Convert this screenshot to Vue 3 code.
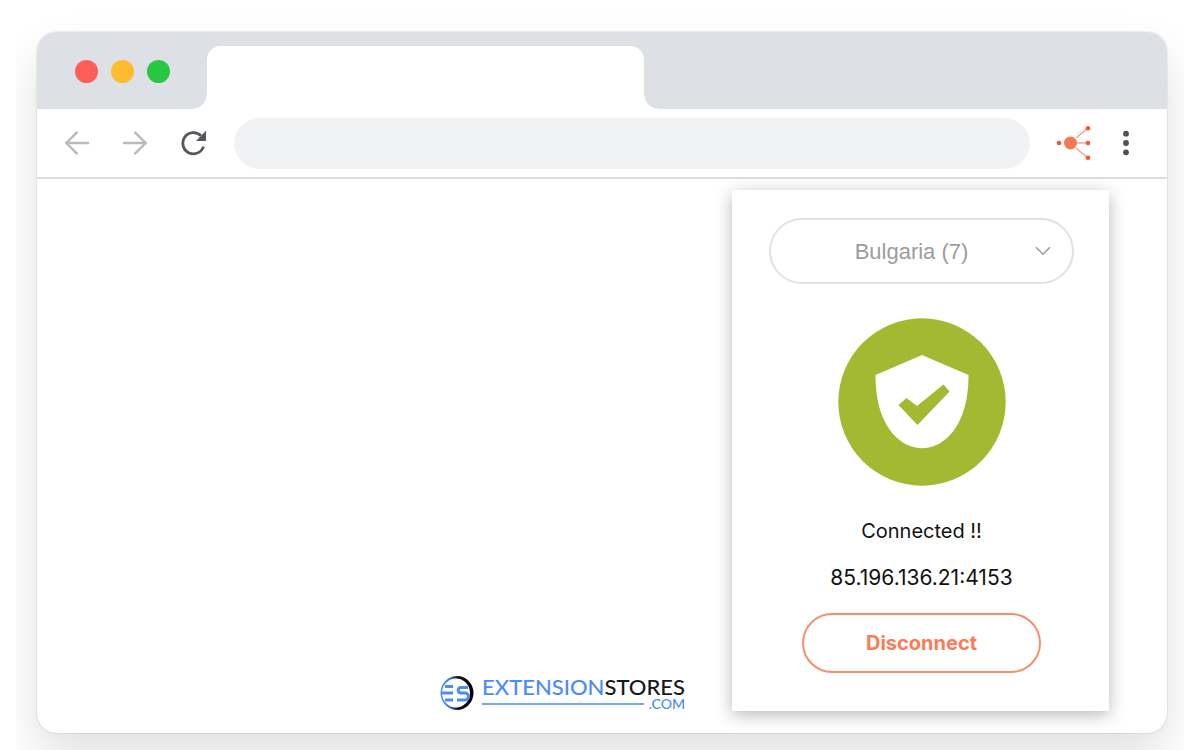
<script setup>
import { ref } from 'vue'

const country = ref('Bulgaria (7)')
const address = ref('')
</script>

<template>
  <main class="stage">
    <div class="window">
      <header class="tab-strip">
        <div class="lights">
          <span class="light red"></span>
          <span class="light amber"></span>
          <span class="light green"></span>
        </div>
        <div class="tab"></div>
      </header>

      <nav class="toolbar">
        <button class="tool" aria-label="Back">
          <svg width="26" height="26" viewBox="0 0 26 26" fill="none" stroke="#b9babb" stroke-width="2.4">
            <path d="M25 13H2.5M13.5 1.8L2.3 13L13.5 24.2" />
          </svg>
        </button>
        <button class="tool" aria-label="Forward">
          <svg width="26" height="26" viewBox="0 0 26 26" fill="none" stroke="#b9babb" stroke-width="2.4">
            <path d="M1 13H23.5M12.5 1.8L23.7 13L12.5 24.2" />
          </svg>
        </button>
        <button class="tool" aria-label="Reload">
          <svg width="26" height="26" viewBox="0 0 26 26" fill="none">
            <path d="M23.5 16.6A10.6 10.6 0 1 1 21 5.8" stroke="#54585c" stroke-width="2.8" />
            <path d="M26 0.8V11H16Z" fill="#54585c" />
          </svg>
        </button>
        <input v-model="address" class="address" type="text" aria-label="Address" />
        <button class="tool extension" aria-label="Proxy extension">
          <svg width="36" height="36" viewBox="0 0 36 36">
            <path d="M20 13L32 3M21 18H32M20 23L32 33" stroke="#f9a58b" stroke-width="1.6" />
            <circle cx="14.5" cy="18" r="6.5" fill="#f47a53" />
            <g fill="#f1582c">
              <circle cx="3" cy="18" r="2.3" />
              <circle cx="32" cy="3.3" r="2.3" />
              <circle cx="32" cy="18" r="2.3" />
              <circle cx="32" cy="32.7" r="2.3" />
            </g>
          </svg>
        </button>
        <button class="tool" aria-label="Menu">
          <svg width="8" height="26" viewBox="0 0 8 26" fill="#4d5156">
            <circle cx="4" cy="3.7" r="2.9" />
            <circle cx="4" cy="13" r="2.9" />
            <circle cx="4" cy="22.3" r="2.9" />
          </svg>
        </button>
      </nav>

      <div class="content">
        <a class="brand" href="#" aria-label="ExtensionStores.com">
          <svg class="mark" width="34" height="36" viewBox="0 0 34 36" fill="none">
            <defs>
              <linearGradient id="ring" x1="0" y1="0" x2="1" y2="0">
                <stop offset="0" stop-color="#4a8cf7" />
                <stop offset="0.3" stop-color="#3f76cf" />
                <stop offset="0.55" stop-color="#0c0f16" />
                <stop offset="1" stop-color="#000" />
              </linearGradient>
            </defs>
            <path
              fill="url(#ring)"
              fill-rule="evenodd"
              d="M17 1A16.5 17 0 1 1 17 35A16.5 17 0 1 1 17 1ZM16 3.5A14 14.5 0 1 0 16 32.5A14 14.5 0 1 0 16 3.5Z"
            />
            <g stroke="#4a8cf7" stroke-width="3">
              <path d="M5 11.5H13M1 18H13M5 25H13" />
              <path d="M28 12.5H20.5A2.8 2.8 0 0 0 20.5 18H25A3.4 3.4 0 0 1 25 25H17" />
            </g>
          </svg>
          <span class="wordmark">
            <span class="name"><span class="blue">EXTENSION</span>STORES</span>
            <span class="suffix"><span class="rule"></span>.COM</span>
          </span>
        </a>

        <section class="panel">
          <div class="picker">
            <select v-model="country" aria-label="Country">
              <option>Bulgaria (7)</option>
            </select>
            <svg width="16" height="10" viewBox="0 0 16 10" fill="none" stroke="#9c9c9c" stroke-width="1.6">
              <path d="M1 1.2L8 8.2L15 1.2" />
            </svg>
          </div>
          <svg class="shield" width="168" height="168" viewBox="0 0 168 168">
            <circle cx="84" cy="84" r="83.7" fill="#a3b931" />
            <path
              d="M84 37L130.5 57C130.5 84 124 106 109 120C94 133.5 74 133.5 59 120C44 106 37.5 84 37.5 57Z"
              fill="#fff"
            />
            <path d="M60.5 87L68.5 80L79 88L105.5 66.5L111.5 73.5L79.5 107Z" fill="#a3b931" />
          </svg>
          <p class="status">Connected !!</p>
          <p class="ip">85.196.136.21:4153</p>
          <button class="disconnect">Disconnect</button>
        </section>
      </div>
    </div>
  </main>
</template>

<style>
body {
  margin: 0;
  background: #fff;
}
</style>

<style scoped>
.stage {
  box-sizing: border-box;
  display: flex;
  min-height: 100vh;
  margin: 0 16px;
  padding: 32px 17px 17px 21px;
  overflow: hidden;
  font-family: Inter, "Liberation Sans", sans-serif;
}
.window {
  flex: 1;
  display: flex;
  flex-direction: column;
  background: #fff;
  border-radius: 20px;
  box-shadow: 0 0 2px rgba(0, 0, 0, 0.2), 0 24px 48px rgba(0, 0, 0, 0.12);
}
.tab-strip {
  display: flex;
  height: 63px;
  padding-top: 14px;
  background: #dde0e5;
  border-radius: 20px 20px 0 0;
}
.lights {
  box-sizing: border-box;
  display: flex;
  gap: 13px;
  width: 15%;
  padding: 14px 0 0 38px;
}
.light {
  width: 23px;
  height: 23px;
  border-radius: 50%;
}
.red { background: #fd5e57; }
.amber { background: #fdbc2e; }
.green { background: #27c840; }
.tab {
  position: relative;
  width: 38.7%;
  background: #fff;
  border-radius: 14px 14px 0 0;
}
.tab::before,
.tab::after {
  content: "";
  position: absolute;
  bottom: 0;
  width: 14px;
  height: 14px;
}
.tab::before {
  right: 100%;
  background: radial-gradient(circle at 0 0, transparent 13px, #fff 14px);
}
.tab::after {
  left: 100%;
  background: radial-gradient(circle at 100% 0, transparent 13px, #fff 14px);
}
.toolbar {
  display: flex;
  align-items: center;
  height: 68px;
  gap: 32px;
  padding: 0 37px 0 27px;
  border-bottom: 2px solid #dddee0;
}
.tool {
  display: flex;
  padding: 0;
  border: 0;
  background: none;
}
.address {
  flex: 1;
  min-width: 0;
  height: 51px;
  box-sizing: border-box;
  margin-left: -4px;
  padding: 0 24px;
  border: 0;
  border-radius: 26px;
  background: #f1f2f4;
  font: 20px Inter, sans-serif;
}
.extension {
  margin-left: -6px;
  margin-right: -2px;
}
.content {
  flex: 1;
  display: flex;
  align-items: flex-start;
  justify-content: flex-end;
  gap: 47px;
  padding: 11px 58px 22px;
}
.brand {
  display: flex;
  gap: 8px;
  align-self: flex-end;
  color: #17181a;
  text-decoration: none;
  font-family: Lato, sans-serif;
  font-weight: 500;
}
.wordmark {
  display: flex;
  flex-direction: column;
}
.name {
  font-size: 22px;
  line-height: 24px;
}
.blue,
.suffix {
  color: #4a8cf7;
}
.suffix {
  display: flex;
  align-items: center;
  gap: 5px;
  font-size: 14px;
  line-height: 10px;
}
.rule {
  flex: 1;
  height: 2px;
  background: #75a6f9;
}
.panel {
  box-sizing: border-box;
  display: flex;
  flex-direction: column;
  align-items: center;
  width: 377px;
  padding: 28px 35px 38px 37px;
  background: #fff;
  box-shadow: 0 4px 16px rgba(0, 0, 0, 0.28);
}
.picker {
  display: grid;
  align-items: center;
  width: 100%;
}
.picker select,
.picker svg {
  grid-area: 1 / 1;
}
.picker svg {
  justify-self: end;
  margin-right: 23px;
  pointer-events: none;
}
.picker select {
  appearance: none;
  width: 100%;
  height: 66px;
  padding: 0 40px 0 20px;
  border: 2px solid #e1e1e1;
  border-radius: 33px;
  background: #fff;
  color: #9c9c9c;
  font: 22px "Liberation Sans", Arial, sans-serif;
  text-align: center;
  text-align-last: center;
}
.shield {
  margin: 34px 0 33px;
}
.status,
.ip {
  margin: 0;
  font-size: 20px;
  line-height: 24px;
  color: #111;
}
.ip {
  margin: 23px 0;
  font-size: 21px;
}
.disconnect {
  width: 239px;
  height: 60px;
  border: 2px solid #f98e6f;
  border-radius: 30px;
  background: #fff;
  color: #f97c58;
  font: 700 20px Inter, sans-serif;
}
</style>
